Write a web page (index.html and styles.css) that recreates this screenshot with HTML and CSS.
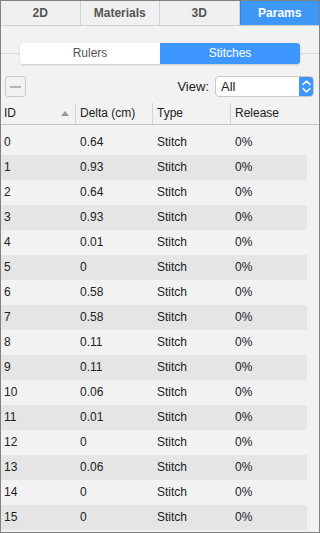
FILE: index.html
```html
<!DOCTYPE html>
<html lang="en">
<head>
    <meta charset="UTF-8">
    <meta name="viewport" content="width=device-width, initial-scale=1.0">
    <title>Params</title>
    <link rel="stylesheet" href="styles.css">
</head>
<body>
    <!-- top tabs -->
    <div class="tabs">
        <div class="tab">2D</div>
        <div class="tab">Materials</div>
        <div class="tab">3D</div>
        <div class="tab active">Params</div>
    </div>

    <!-- rulers / stitches switch -->
    <div class="mode-bar">
        <div class="segment">
            <div class="seg-item">Rulers</div>
            <div class="seg-item on">Stitches</div>
        </div>
    </div>

    <div class="toolbar">
        <button class="btn-remove" disabled><span class="dash"></span></button>
        <div class="view-filter">
            <label>View:</label>
            <div class="select">
                <span class="select-value">All</span>
                <span class="select-arrow">
                    <svg width="15" height="21" viewBox="0 0 15 21">
                        <path d="M4 8.5 L7.5 5 L11 8.5" fill="none" stroke="#fff" stroke-width="1.5" stroke-linecap="round" stroke-linejoin="round"/>
                        <path d="M4 12.5 L7.5 16 L11 12.5" fill="none" stroke="#fff" stroke-width="1.5" stroke-linecap="round" stroke-linejoin="round"/>
                    </svg>
                </span>
            </div>
        </div>
    </div>

    <div class="grid-head">
        <div class="col c-id">ID<span class="sort-up"></span></div>
        <div class="col c-delta">Delta (cm)</div>
        <div class="col c-type">Type</div>
        <div class="col c-rel">Release</div>
    </div>

    <div class="grid-body" id="rows"></div>

    <script>
        const deltas = ['0.64', '0.93', '0.64', '0.93', '0.01', '0', '0.58', '0.58',
                        '0.11', '0.11', '0.06', '0.01', '0', '0.06', '0', '0'];
        const rows = document.getElementById('rows');
        deltas.forEach((d, i) => {
            const row = document.createElement('div');
            row.className = 'row' + (i % 2 ? ' odd' : '');
            row.innerHTML =
                '<div class="col c-id">' + i + '</div>' +
                '<div class="col c-delta">' + d + '</div>' +
                '<div class="col c-type">Stitch</div>' +
                '<div class="col c-rel">0%</div>';
            rows.appendChild(row);
        });
    </script>
</body>
</html>
```

FILE: styles.css
```css
* {
    margin: 0;
    padding: 0;
    box-sizing: border-box;
}

html, body {
    width: 320px;
    height: 533px;
    overflow: hidden;
}

body {
    border: 1px solid #828282;
    background: #f2f2f2;
    font-family: "Liberation Sans", Arial, sans-serif;
    font-size: 12px;
    color: #222;
}

/* tabs */
.tabs {
    display: flex;
    height: 25px;
    border-bottom: 1px solid #cfcfcf;
}

.tab {
    flex: 1;
    text-align: center;
    line-height: 24px;
    font-weight: bold;
    color: #555;
    background: #f0f0f0;
    border-right: 1px solid #d2d2d2;
}

.tab.active {
    background: #3d97f7;
    color: #fff;
    border-right: none;
    border-left: 1px solid #3582d6;
}

/* segmented switch */
.mode-bar {
    margin-top: 17px;
    background: linear-gradient(#dcdcdc, #dcdcdc) center / 100% 1px no-repeat;
}

.segment {
    display: flex;
    height: 21px;
    margin: 0 19px 0 19px;
    border-radius: 3px;
    overflow: hidden;
    box-shadow: 0 1px 2px rgba(0, 0, 0, 0.18);
}

.seg-item {
    flex: 1;
    text-align: center;
    line-height: 21px;
    background: #fff;
    color: #555;
}

.seg-item.on {
    background: #3d97ff;
    color: #fff;
}

/* toolbar */
.toolbar {
    display: flex;
    align-items: center;
    justify-content: space-between;
    margin-top: 12px;
    padding: 0 5px 0 4px;
    height: 21px;
}

.btn-remove {
    width: 21px;
    height: 21px;
    border: 1px solid #c8c8c8;
    border-radius: 3px;
    background: #f2f2f2;
    display: flex;
    align-items: center;
    justify-content: center;
}

.btn-remove .dash {
    width: 11px;
    height: 2px;
    background: #b4b4b4;
}

.view-filter {
    display: flex;
    align-items: center;
    gap: 6px;
}

.view-filter label {
    font-size: 13px;
    color: #222;
}

.select {
    display: flex;
    width: 99px;
    height: 21px;
    background: #fff;
    border: 1px solid #c9c9c9;
    border-radius: 4px;
    overflow: hidden;
}

.select-value {
    flex: 1;
    padding-left: 5px;
    line-height: 19px;
    font-size: 13px;
}

.select-arrow {
    width: 15px;
    margin: -1px -1px -1px 0;
    background: #3d97ff;
    display: flex;
    align-items: center;
    justify-content: center;
}

/* table */
.grid-head {
    display: flex;
    margin-top: 6px;
    height: 22px;
    border-bottom: 1px solid #c4c4c4;
    padding-right: 12px;
}

.grid-head .col {
    line-height: 21px;
    height: 21px;
    border-right: 1px solid #d4d4d4;
}

.grid-head .col:last-child {
    border-right: none;
}

.col {
    white-space: nowrap;
    overflow: hidden;
}

.c-id {
    width: 75px;
    padding-left: 3px;
    position: relative;
}

.c-delta {
    width: 77px;
    padding-left: 4px;
}

.c-type {
    width: 78px;
    padding-left: 4px;
}

.c-rel {
    flex: 1;
    padding-left: 4px;
}

.sort-up {
    position: absolute;
    right: 6px;
    top: 8px;
    border-left: 4px solid transparent;
    border-right: 4px solid transparent;
    border-bottom: 5px solid #9a9a9a;
}

.grid-body {
    margin-top: 5px;
    width: 306px;
}

.row {
    display: flex;
    height: 25px;
    line-height: 25px;
}

.row.odd {
    background: #e5e5e5;
}
```
